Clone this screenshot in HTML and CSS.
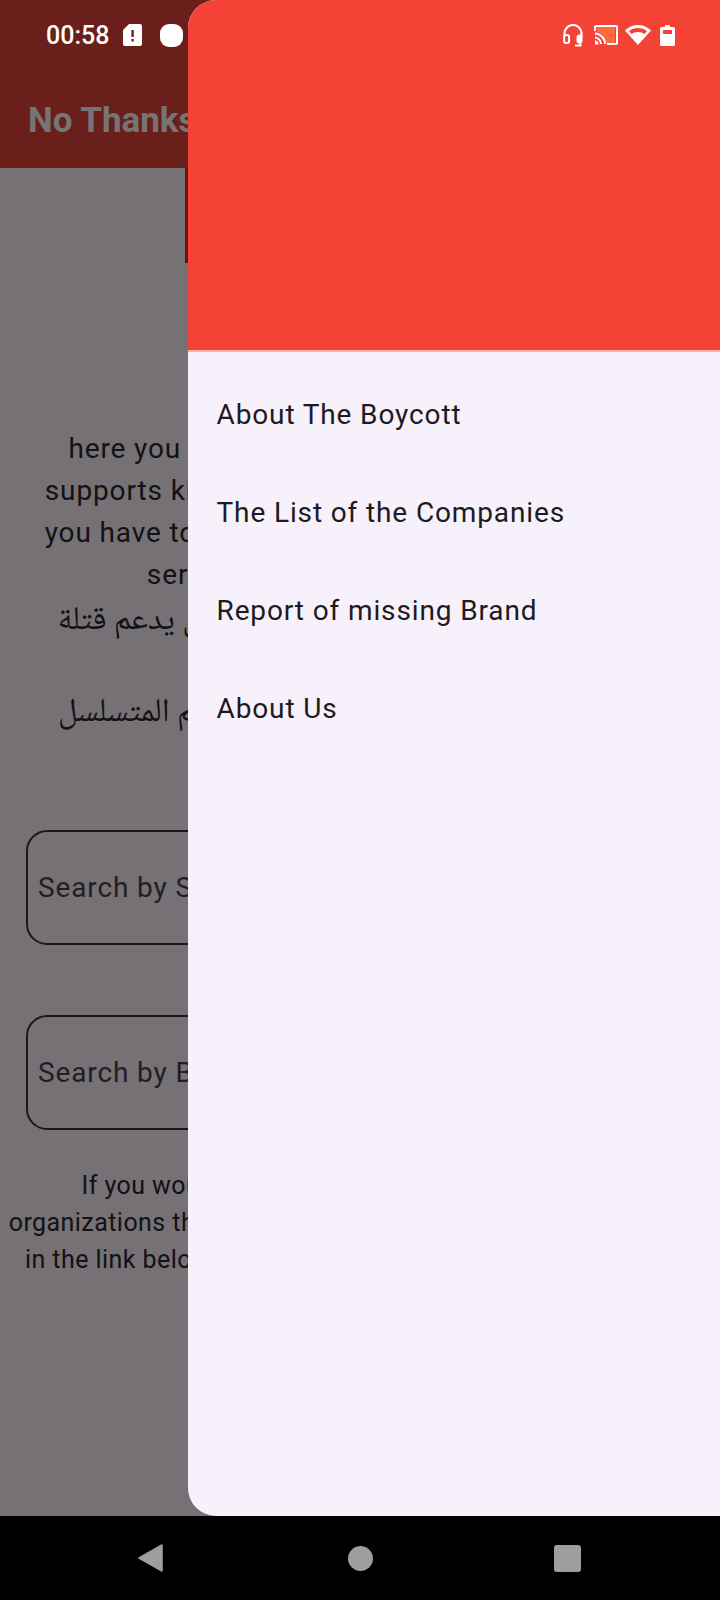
FILE: index.html
```html
<!DOCTYPE html>
<html lang="en">
<head>
<meta charset="utf-8">
<title>No Thanks</title>
<link rel="stylesheet" href="styles.css">
</head>
<body>
<div class="screen">
  <div class="app">
    <header class="appbar">
      <h1 class="appbar-title">No Thanks</h1>
    </header>
    <main class="content">
      <div class="logo"></div>
      <div class="intro">
        <p class="line">here you can check if a product or company,</p>
        <p class="line">supports killers of the children or not, so to find</p>
        <p class="line">you have to enter its barcode or the product's id</p>
        <p class="line">serial number in the search field</p>
      </div>
      <div class="intro-ar" dir="rtl" lang="ar">
        <p class="line">هنا يمكنك أن تعرف ما إذا كان هذا المعامل يدعم قتلة</p>
        <p class="line">الأطفال</p>
        <p class="line">عليك هنا إدخال باركود المنتج أو هذا الرقم المتسلسل</p>
      </div>
      <div class="field field-first"><span class="placeholder">Search by Serial Number</span></div>
      <div class="field field-second"><span class="placeholder">Search by Brand Name</span></div>
      <div class="note">
        <p class="line">If you would like to add other brands or factories</p>
        <p class="line">organizations that support killers, please also add them to us</p>
        <p class="line">in the link below or just in the side menu of the application</p>
      </div>
    </main>
  </div>
  <div class="scrim"></div>

  <aside class="drawer">
    <div class="drawer-header"></div>
    <nav class="drawer-list">
      <a class="tile">About The Boycott</a>
      <a class="tile">The List of the Companies</a>
      <a class="tile">Report of missing Brand</a>
      <a class="tile">About Us</a>
    </nav>
  </aside>

  <div class="statusbar">
    <span class="clock">00:58</span>
    <svg class="ic ic-sim" viewBox="0 0 19 22"><path fill="#fff" fill-rule="evenodd" d="M6 0h11a2 2 0 0 1 2 2v18a2 2 0 0 1-2 2H2a2 2 0 0 1-2-2V6zM8.400 6v7h2.400V6zM8.400 15v2.400h2.400V15z"/></svg>
    <span class="blob"></span>
    <span class="status-gap"></span>
    <svg class="ic ic-head" viewBox="0 0 20 23"><path fill="none" stroke="#fff" stroke-width="2.200" d="M1.500 13V9.500a8.500 8.500 0 0 1 17 0V13"/><rect x="1.100" y="11" width="5" height="8" rx="2" fill="none" stroke="#fff" stroke-width="2"/><rect x="14" y="11" width="5" height="8" rx="2" fill="#fff" stroke="#fff" stroke-width="1"/><path fill="none" stroke="#fff" stroke-width="1.800" d="M17.500 19v2.500H12"/></svg>
    <svg class="ic ic-cast" viewBox="0 0 24 20"><path fill="#ff6a3c" d="M3 2h18v16H12C11 11 8 8 3 7z"/><path fill="none" stroke="#fff" stroke-width="2" d="M1 6V2a1 1 0 0 1 1-1h20a1 1 0 0 1 1 1v16a1 1 0 0 1-1 1H13"/><path fill="none" stroke="#fff" stroke-width="2" d="M1 8.500A10.500 10.500 0 0 1 11 19M1 12.500A6.500 6.500 0 0 1 7 19"/><path fill="#fff" d="M1 15.500A3.500 3.500 0 0 1 4.500 19.500H1z"/></svg>
    <svg class="ic ic-wifi" viewBox="0 0 26 20"><path fill="#fff" fill-rule="evenodd" d="M13 20 0 5.500C3.500 2 8 0 13 0s9.500 2 13 5.500zM13 3C9.500 3 6.500 4.200 4 6.200l2.600 2.900C8.300 7.800 10.500 7 13 7s4.700.8 6.400 2.100l2.600-2.900C19.500 4.200 16.500 3 13 3z"/></svg>
    <svg class="ic ic-batt" viewBox="0 0 15 21"><path fill="#fff" fill-rule="evenodd" d="M5 0h5v2h3.500A1.500 1.500 0 0 1 15 3.500v16a1.500 1.500 0 0 1-1.500 1.500h-12A1.500 1.500 0 0 1 0 19.500v-16A1.500 1.500 0 0 1 1.500 2H5zM3 5v4h9V5z"/></svg>
  </div>

  <div class="navbar">
    <svg class="nav-back" viewBox="0 0 25 28"><path fill="#9e9e9e" stroke="#9e9e9e" stroke-width="1.500" stroke-linejoin="round" d="M24 1v26L1 14z"/></svg>
    <span class="nav-home"></span>
    <span class="nav-recent"></span>
  </div>
</div>
</body>
</html>
```

FILE: styles.css
```css
* { box-sizing: border-box; }

html, body {
  margin: 0;
  padding: 0;
  background: #000;
}

.screen {
  position: relative;
  width: 720px;
  height: 1600px;
  overflow: hidden;
  font-family: Roboto, "DejaVu Sans", sans-serif;
  color: #2a282d;
}

.line {
  margin: 0;
  white-space: nowrap;
}

/* Page behind the drawer */
.app {
  height: 1516px;
  background: #fef7ff;
  overflow: hidden;
}

.appbar {
  height: 168px;
  padding: 103px 0 0 28px;
  background: #e8443c;
}

.appbar-title {
  margin: 0;
  font-size: 35px;
  line-height: 36px;
  font-weight: 700;
  color: #fff;
}

.content {
  display: flex;
  flex-direction: column;
  align-items: center;
}

.logo {
  flex: none;
  width: 350px;
  height: 95px;
  background: #ff1f14;
}

.intro {
  margin-top: 165px;
  text-align: center;
  font-size: 28px;
  line-height: 42px;
  letter-spacing: .875px;
}

.intro-ar {
  margin-top: 3px;
  text-align: center;
  font-family: "Noto Naskh Arabic", "Noto Sans Arabic", "DejaVu Sans", sans-serif;
  font-size: 33px;
  line-height: 46px;
}

.field {
  flex: none;
  display: flex;
  align-items: center;
  align-self: flex-start;
  width: 666px;
  height: 115px;
  margin-left: 26px;
  padding-left: 10px;
  border: 2px solid #36343a;
  border-radius: 21px;
}

.field-first { margin-top: 93px; }
.field-second { margin-top: 70px; }

.placeholder {
  font-size: 28px;
  letter-spacing: .875px;
  color: #49454f;
  white-space: nowrap;
}

.note {
  margin-top: 37px;
  text-align: center;
  font-size: 25px;
  line-height: 37px;
  letter-spacing: .44px;
}

.scrim {
  position: absolute;
  left: 0;
  top: 0;
  width: 720px;
  height: 1516px;
  background: rgba(0, 0, 0, .54);
}

/* Navigation drawer */
.drawer {
  position: absolute;
  left: 188px;
  top: 0;
  width: 532px;
  height: 1516px;
  display: flex;
  flex-direction: column;
  overflow: hidden;
  background: #f6f1fa;
  border-radius: 28px 0 0 28px;
}

.drawer-header {
  flex: none;
  height: 352px;
  background: #f44336;
  border-bottom: 2px solid #f7b3b0;
}

.drawer-list {
  display: flex;
  flex-direction: column;
  padding-top: 13px;
}

.tile {
  display: flex;
  align-items: center;
  height: 98px;
  padding-left: 28.500px;
  font-size: 28px;
  letter-spacing: .875px;
  color: #1d1b20;
}

/* System bars */
.statusbar {
  position: absolute;
  left: 0;
  top: 0;
  width: 720px;
  height: 70px;
  display: flex;
  align-items: center;
  padding-left: 46px;
  color: #fff;
}

.clock {
  flex: none;
  width: 77px;
  font-size: 25px;
  font-weight: 500;
}

.ic {
  flex: none;
  display: block;
}

.ic-sim { width: 19px; height: 22px; }

.blob {
  flex: none;
  width: 23px;
  height: 23px;
  margin-left: 18px;
  border-radius: 9px;
  background: #fff;
}

.status-gap { flex: 1; }

.ic-head { width: 20px; height: 23px; }
.ic-cast { width: 24px; height: 20px; margin-left: 11px; }
.ic-wifi { width: 26px; height: 20px; margin-left: 7px; }
.ic-batt { width: 15px; height: 21px; margin-left: 9px; margin-right: 45px; }

.navbar {
  position: absolute;
  left: 0;
  top: 1516px;
  width: 720px;
  height: 84px;
  background: #000;
  display: flex;
  align-items: center;
  padding: 0 0 0 138px;
}

.nav-back { width: 25px; height: 28px; flex: none; }

.nav-home {
  flex: none;
  width: 25px;
  height: 25px;
  margin-left: 185px;
  border-radius: 50%;
  background: #9e9e9e;
}

.nav-recent {
  flex: none;
  width: 27px;
  height: 27px;
  margin-left: 181px;
  border-radius: 3px;
  background: #9e9e9e;
}
```
